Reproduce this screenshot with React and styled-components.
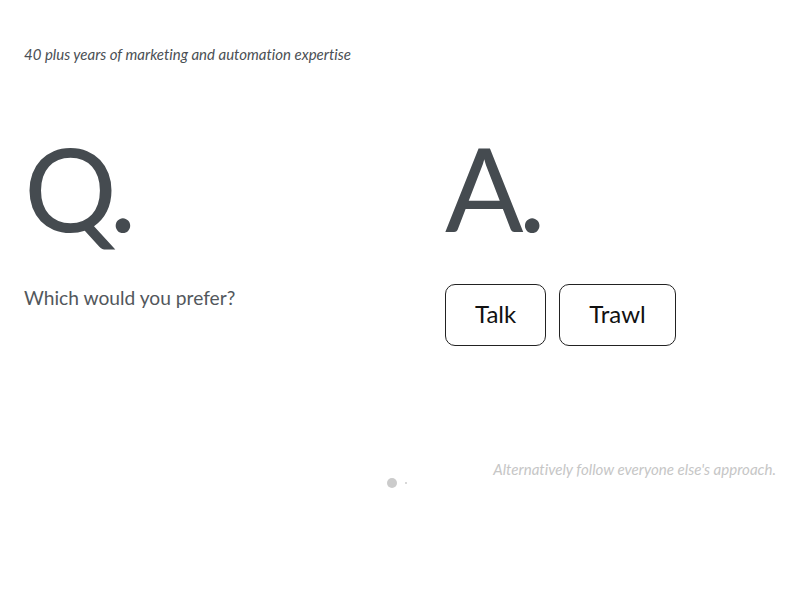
import React from "react";
import styled, { createGlobalStyle } from "styled-components";

const Global = createGlobalStyle`
  html, body { margin: 0; padding: 0; background: #fff; }
  body {
    font-family: Lato, "Open Sans", sans-serif;
    font-variant-ligatures: none;
  }
`;

const Page = styled.div`
  width: 800px;
  height: 600px;
  box-sizing: border-box;
  padding: 44px 24px 0;
  display: flex;
  flex-direction: column;
`;

const Tagline = styled.p`
  margin: 0;
  font-style: italic;
  font-size: 15px;
  line-height: 20px;
  color: #4a4f54;
`;

const Columns = styled.div`
  display: grid;
  grid-template-columns: 1fr 1fr;
  column-gap: 90px;
  margin-top: 66px;
`;

const Column = styled.div`
  display: flex;
  flex-direction: column;
`;

const BigLetter = styled.div`
  font-size: 116px;
  line-height: 116px;
  letter-spacing: -5px;
  color: #454b50;
  height: 120px;
`;

const Question = styled.p`
  margin: 36px 0 0;
  font-size: 19.2px;
  line-height: 24px;
  color: #52575c;
`;

const Options = styled.div`
  display: flex;
  gap: 13px;
  margin-top: 34px;
`;

const Option = styled.button`
  font-family: Lato, sans-serif;
  font-variant-ligatures: none;
  font-size: 24px;
  line-height: 28px;
  color: #111;
  background: #fff;
  border: 1px solid #222;
  border-radius: 10px;
  height: 62px;
  padding: 0 29px 2px;
  cursor: pointer;
`;

const Footer = styled.div`
  display: grid;
  grid-template-columns: 1fr auto;
  margin-top: 113px;
`;

const Alt = styled.p`
  grid-column: 2;
  margin: 0;
  font-style: italic;
  font-size: 15.1px;
  line-height: 20px;
  color: #c6c6c6;
  text-align: right;
`;

const Dots = styled.div`
  display: flex;
  align-items: center;
  justify-content: center;
  gap: 8px;
  margin-top: -1px;
  padding-right: 6px;
`;

const Dot = styled.span`
  display: block;
  width: ${(p) => p.$size}px;
  height: ${(p) => p.$size}px;
  border-radius: 50%;
  background: #cbcbcb;
`;

export default function App() {
  return (
    <>
      <Global />
      <Page>
        <Tagline>40 plus years of marketing and automation expertise</Tagline>
        <Columns>
          <Column>
            <BigLetter>Q.</BigLetter>
            <Question>Which would you prefer?</Question>
          </Column>
          <Column>
            <BigLetter>A.</BigLetter>
            <Options>
              <Option>Talk</Option>
              <Option>Trawl</Option>
            </Options>
          </Column>
        </Columns>
        <Footer>
          <Alt>Alternatively follow everyone else's approach.</Alt>
        </Footer>
        <Dots>
          <Dot $size={10} />
          <Dot $size={2} />
        </Dots>
      </Page>
    </>
  );
}
